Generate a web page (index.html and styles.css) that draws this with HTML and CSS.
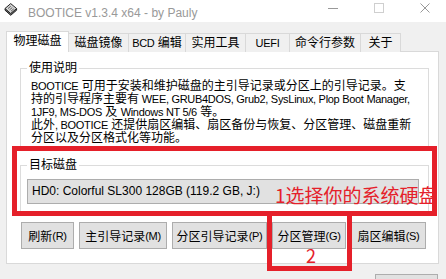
FILE: index.html
```html
<!DOCTYPE html>
<html lang="zh-CN">
<head>
<meta charset="utf-8">
<title>BOOTICE</title>
<link rel="stylesheet" href="styles.css">
</head>
<body>
<div class="window">
  <div class="titlebar">
    <svg class="appicon" viewBox="0 0 14 13" aria-hidden="true">
      <path d="M1 5.5 V7.2 L6.7 12.3 L12.6 7.2 V5.5" fill="#6a6a6a" stroke="#222" stroke-width="1"/>
      <path d="M1 5.5 L6.7 0.6 L12.6 5.5 L6.7 10.5 Z" fill="#d4d4d4" stroke="#222" stroke-width="1"/>
      <path d="M4 5.6 L6.8 3.2 M5.5 6.9 L8.3 4.5 M7 8.2 L9.8 5.8" stroke="#555" stroke-width="0.9"/>
    </svg>
    <span class="title">BOOTICE v1.3.4 x64 - by Pauly</span>
    <div class="controls">
      <span class="ctl-min"></span>
      <span class="ctl-max"></span>
      <svg class="ctl-close" viewBox="0 0 10 10" aria-hidden="true">
        <path d="M0.5 0.5 L9.5 9.5 M9.5 0.5 L0.5 9.5" stroke="#999" stroke-width="1"/>
      </svg>
    </div>
  </div>

  <div class="tabs">
    <div class="tab active t1">物理磁盘</div>
    <div class="tab t2">磁盘镜像</div>
    <div class="tab t3"><span class="en">BCD</span>&nbsp;编辑</div>
    <div class="tab t4">实用工具</div>
    <div class="tab t5"><span class="en">UEFI</span></div>
    <div class="tab t6">命令行参数</div>
    <div class="tab t7">关于</div>
  </div>

  <div class="panel">
    <fieldset class="group info">
      <legend>使用说明</legend>
      <p class="desc"><span class="en">BOOTICE</span> 可用于安装和维护磁盘的主引导记录或分区上的引导记录。支<br>持的引导程序主要有<span class="en"> WEE, GRUB4DOS, Grub2, SysLinux, Plop Boot Manager,</span><br><span class="en">1JF9, MS-DOS</span> 及 <span class="en">Windows NT 5/6</span> 等。<br>此外<span class="en">, BOOTICE</span> 还提供扇区编辑、扇区备份与恢复、分区管理、磁盘重新<br>分区以及分区格式化等功能。</p>
    </fieldset>

    <fieldset class="group target">
      <legend>目标磁盘</legend>
      <div class="combo">HD0: Colorful SL300 128GB (119.2 GB, J:)</div>
    </fieldset>

    <div class="buttons">
      <button class="btn b1">刷新<span class="en">(R)</span></button>
      <button class="btn b2">主引导记录<span class="en">(M)</span></button>
      <button class="btn b3">分区引导记录<span class="en">(P)</span></button>
      <button class="btn b4">分区管理<span class="en">(G)</span></button>
      <button class="btn b5">扇区编辑<span class="en">(S)</span></button>
    </div>
  </div>

  <div class="footer">
    <button class="btn exit"></button>
  </div>

  <div class="mark mark-big"></div>
  <div class="mark mark-btn"></div>
  <div class="note note1">1选择你的系统硬盘</div>
  <div class="note note2">2</div>
</div>
</body>
</html>
```

FILE: styles.css
```css
* { box-sizing: border-box; }
html, body { margin: 0; padding: 0; }
body {
  width: 446px;
  height: 279px;
  overflow: hidden;
  background: #f0f0f0;
  font-family: "Liberation Sans", "Noto Sans CJK SC", sans-serif;
  font-size: 12px;
  color: #000;
}
.window { position: relative; width: 446px; height: 279px; overflow: hidden; }

.en { font-size: 11px; letter-spacing: -0.3px; line-height: 10px; }

/* title bar */
.titlebar {
  height: 22px;
  background: #fff;
  display: flex;
  align-items: flex-start;
}
.appicon { width: 14px; height: 13px; margin: 3px 0 0 4px; flex: none; }
.title {
  margin: 6px 0 0 10px;
  line-height: 14px;
  font-size: 12px;
  color: #999;
  white-space: nowrap;
}
.controls {
  margin-left: auto;
  display: flex;
  align-items: flex-start;
  gap: 36px;
  padding: 3px 16px 0 0;
}
.ctl-min { width: 10px; height: 1px; background: #999; margin-top: 5px; }
.ctl-max { width: 10px; height: 10px; border: 1px solid #cfcfcf; }
.ctl-close { width: 10px; height: 10px; }

/* tabs */
.tabs {
  display: flex;
  align-items: flex-end;
  height: 21px;
  margin: 9px 0 -1px 6px;
}
.tab {
  height: 19px;
  border: 1px solid #d9d9d9;
  border-bottom: 0;
  background: #f0f0f0;
  display: flex;
  align-items: center;
  justify-content: center;
  margin-left: -1px;
  line-height: 14px;
  white-space: nowrap;
  padding-bottom: 1px;
}
.tab.active {
  height: 21px;
  background: #fff;
  position: relative;
  z-index: 1;
  margin-left: 0;
  padding-bottom: 2px;
}
.t1 { width: 63px; }
.t2 { width: 61px; }
.t3 { width: 58px; }
.t4 { width: 61px; }
.t5 { width: 45px; }
.t6 { width: 72px; }
.t7 { width: 41px; }

/* panel */
.panel {
  margin: 0 7px 0 6px;
  height: 213px;
  border: 1px solid #d9d9d9;
  background: #fff;
  padding: 9px 9px 0 13px;
}
.group {
  margin: 0;
  min-width: 0;
  border: 1px solid #dcdcdc;
  padding: 0 9px 0 6px;
}
.group legend {
  padding: 0 2px;
  margin: 0;
  font-size: 12px;
  line-height: 14px;
}
.info { padding-bottom: 1px; }
.desc {
  margin: 5px 0 0;
  padding-left: 4px;
  line-height: 13px;
  white-space: nowrap;
}
.target { margin-top: 11px; padding-bottom: 8px; }
.combo {
  margin-top: 7px;
  height: 25px;
  background: #e1e1e1;
  border: 1px solid #adadad;
  padding-left: 4px;
  line-height: 23px;
  white-space: nowrap;
}

/* buttons */
.buttons {
  display: flex;
  gap: 5px;
  margin: 9px 0 0 1px;
}
.btn {
  height: 27px;
  padding: 0;
  margin: 0;
  background: #e1e1e1;
  border: 1px solid #adadad;
  border-radius: 0;
  font: inherit;
  color: #000;
  display: flex;
  align-items: center;
  justify-content: center;
  white-space: nowrap;
}
.b1 { width: 53px; }
.b2 { width: 88px; }
.b3 { width: 95px; }
.b4 { width: 74px; }
.b5 { width: 75px; }

.footer {
  display: flex;
  justify-content: flex-end;
  padding: 10px 8px 0 0;
}
.exit { width: 63px; height: 23px; }

/* annotations */
.mark {
  position: absolute;
  border: 5px solid #e5202a;
}
.mark-big { left: 12px; top: 146px; width: 425px; height: 70px; }
.mark-btn { left: 267px; top: 211px; width: 85px; height: 60px; }
.note {
  position: absolute;
  color: #e5202a;
  font-family: "Noto Sans CJK SC", sans-serif;
  white-space: nowrap;
}
.note1 { left: 275px; top: 185px; font-size: 19px; line-height: 19px; }
.note2 { left: 306px; top: 246px; font-size: 18px; line-height: 18px; }
```
